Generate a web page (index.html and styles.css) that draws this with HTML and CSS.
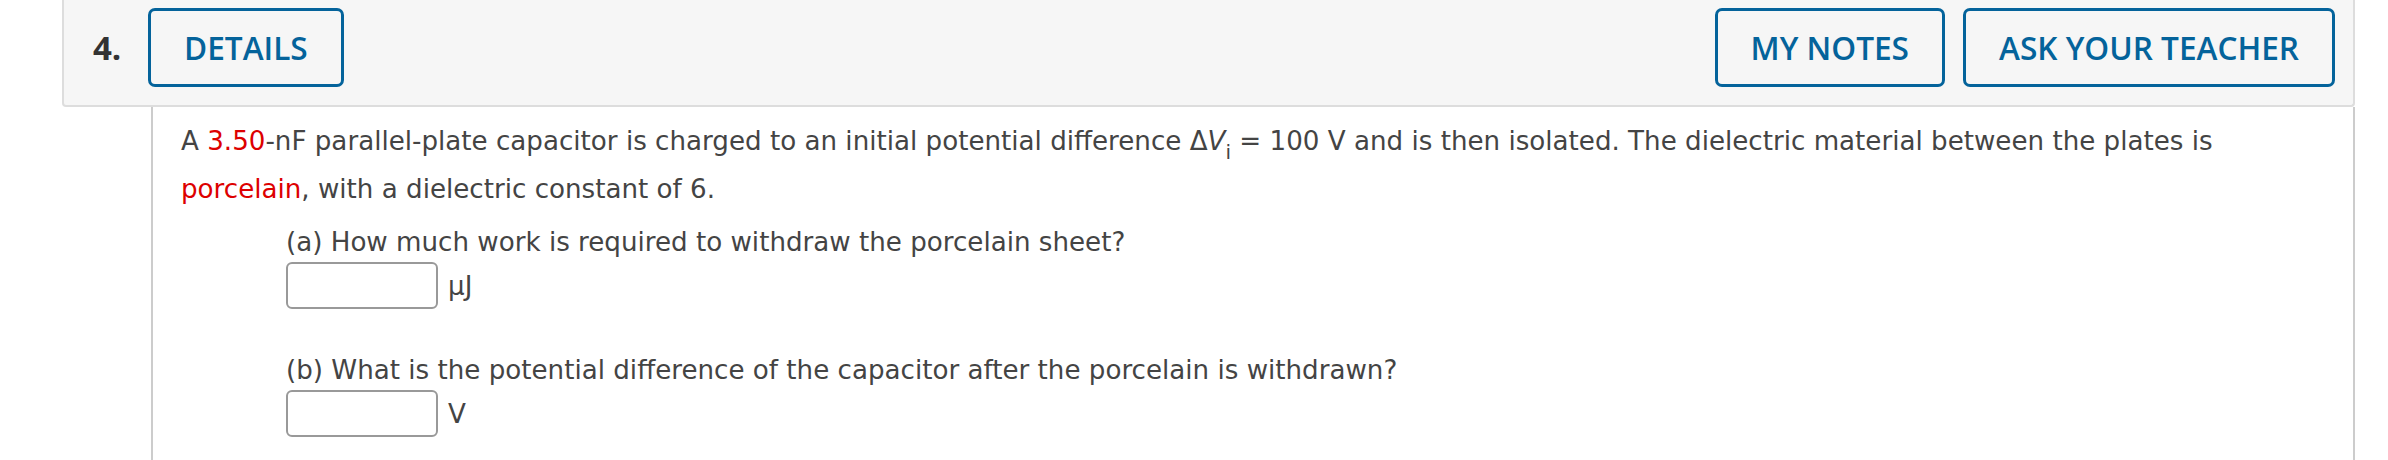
FILE: index.html
```html
<!DOCTYPE html>
<html lang="en">
<head>
<meta charset="utf-8">
<title>Question 4</title>
<link rel="stylesheet" href="styles.css">
</head>
<body>
<div class="question">
  <div class="qhead">
    <span class="qnum">4.</span>
    <button class="btn">DETAILS</button>
    <div class="spacer"></div>
    <div class="actions">
      <button class="btn">MY NOTES</button>
      <button class="btn">ASK YOUR TEACHER</button>
    </div>
  </div>
  <div class="qbody">
    <p class="stem">A <span class="red">3.50</span>-nF parallel-plate capacitor is charged to an initial potential difference &Delta;<i>V</i><sub>i</sub> = 100 V and is then isolated. The dielectric material between the plates is <span class="red">porcelain</span>, with a dielectric constant of 6.</p>
    <div class="part part-a">
      <div class="label">(a) How much work is required to withdraw the porcelain sheet?</div>
      <div class="answer"><input class="box" type="text"><span class="unit">&mu;J</span></div>
    </div>
    <div class="part part-b">
      <div class="label">(b) What is the potential difference of the capacitor after the porcelain is withdrawn?</div>
      <div class="answer"><input class="box" type="text"><span class="unit">V</span></div>
    </div>
  </div>
</div>
</body>
</html>
```
FILE: styles.css
```css
html, body {
  margin: 0;
  padding: 0;
  background: #ffffff;
}
body {
  font-family: "DejaVu Sans", Verdana, sans-serif;
  color: #444444;
}
.question {
  margin: 0 33px 0 62px;
}
.qhead {
  display: flex;
  align-items: center;
  background: #f6f6f6;
  border: 2px solid #dddddd;
  border-top: none;
  border-radius: 0 0 4px 4px;
  padding: 8px 18px 18px 29px;
}
.qnum {
  width: 55px;
  font-family: "Open Sans", "DejaVu Sans", sans-serif;
  font-weight: 700;
  font-size: 33px;
  color: #333333;
  line-height: 40px;
}
.spacer {
  flex: 1;
}
.actions {
  display: flex;
  gap: 18px;
}
.btn {
  box-sizing: border-box;
  height: 79px;
  padding: 0 33px;
  background: #f6f6f6;
  border: 3px solid #04639b;
  border-radius: 7px;
  color: #04639b;
  font-family: "Open Sans", sans-serif;
  font-weight: 600;
  font-size: 31.6px;
}
.qbody {
  margin-left: 89px;
  border-left: 2px solid #cccccc;
  border-right: 2px solid #cccccc;
  padding: 10px 40px 0 28px;
  min-height: 343px;
}
.stem {
  margin: 0;
  font-size: 26.15px;
  line-height: 48px;
}
.red {
  color: #dd0000;
}
sub {
  font-size: 20px;
  line-height: 0;
  vertical-align: -9px;
}
.part {
  margin-left: 105px;
  font-size: 26.15px;
}
.part-a {
  margin-top: 11px;
}
.part-b {
  margin-top: 43px;
}
.label {
  line-height: 36px;
}
.answer {
  display: flex;
  align-items: center;
  gap: 10px;
  margin-top: 2px;
}
.box {
  box-sizing: border-box;
  width: 152px;
  height: 47px;
  margin: 0;
  border: 2px solid #999999;
  border-radius: 6px;
  background: #ffffff;
}
.unit {
  font-size: 26.15px;
  line-height: 36px;
}
```
